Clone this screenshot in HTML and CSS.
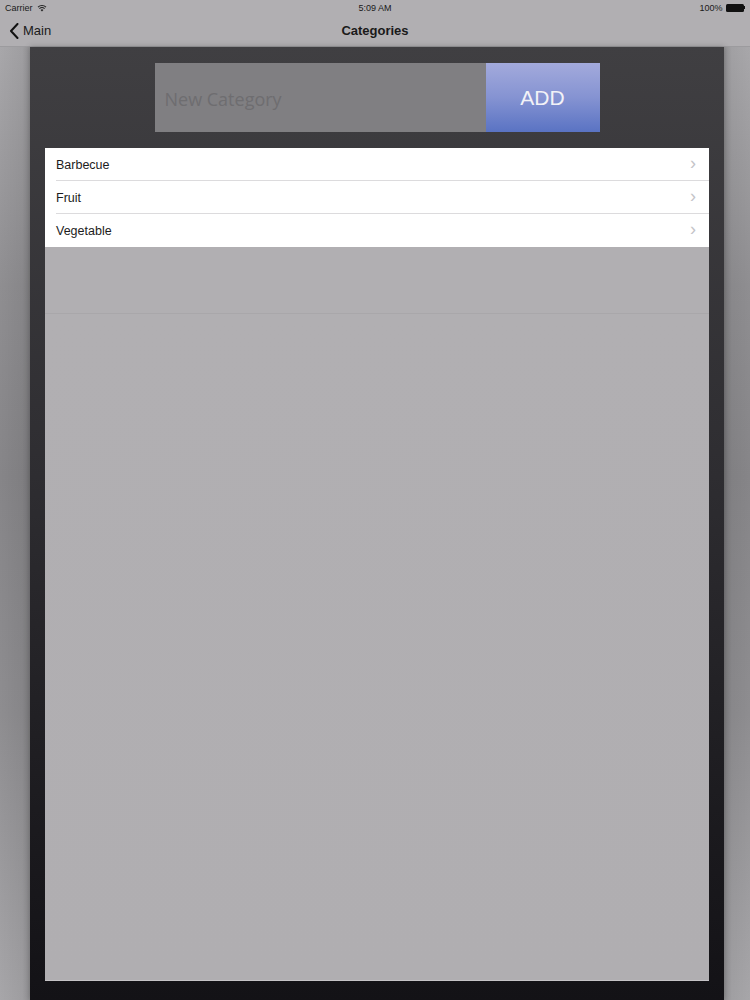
FILE: index.html
```html
<!DOCTYPE html>
<html>
<head>
<meta charset="utf-8">
<link rel="stylesheet" href="styles.css">
</head>
<body>
<div class="screen">
  <header class="topbar">
    <div class="status">
      <div class="st-left">Carrier
        <svg class="wifi" width="10" height="8" viewBox="0 0 10 8"><path d="M5 7.6 L3.6 6 A2 2 0 0 1 6.4 6 Z" fill="#222"/><path d="M2.4 4.7 A3.8 3.8 0 0 1 7.6 4.7" stroke="#222" stroke-width="1.1" fill="none"/><path d="M1 3.1 A5.8 5.8 0 0 1 9 3.1" stroke="#222" stroke-width="1.1" fill="none"/></svg>
      </div>
      <div class="st-mid">5:09 AM</div>
      <div class="st-right">100%
        <span class="battery"></span><span class="bat-tip"></span>
      </div>
    </div>
    <div class="nav">
      <div class="back">
        <svg width="10" height="16" viewBox="0 0 10 16"><path d="M8.5 1 L2 8 L8.5 15" stroke="#111" stroke-width="2" fill="none" stroke-linecap="round" stroke-linejoin="round"/></svg>
        <span>Main</span>
      </div>
      <div class="title">Categories</div>
    </div>
  </header>
  <main class="stage">
    <div class="panel">
      <div class="form">
        <div class="input">New Category</div>
        <div class="add">ADD</div>
      </div>
      <div class="table">
        <div class="row"><span>Barbecue</span><span class="chev">&#x203A;</span></div>
        <div class="row"><span>Fruit</span><span class="chev">&#x203A;</span></div>
        <div class="row last"><span>Vegetable</span><span class="chev">&#x203A;</span></div>
        <div class="empty"></div>
      </div>
    </div>
  </main>
</div>
</body>
</html>
```
FILE: styles.css
```css
* { box-sizing: border-box; }
html, body { margin: 0; padding: 0; }
body {
  width: 750px;
  height: 1000px;
  overflow: hidden;
  font-family: "Liberation Sans", Arial, sans-serif;
  background: #a9a8ab;
}
.screen { width: 750px; height: 1000px; display: flex; flex-direction: column; }
.topbar {
  background: #b1afb2;
  border-bottom: 1px solid #9c9b9e;
  height: 47px;
  flex: none;
}
.status {
  height: 15px;
  display: flex;
  align-items: center;
  justify-content: space-between;
  padding: 0 5px 0 5px;
  font-size: 9px;
  color: #1a1a1a;
  position: relative;
}
.st-left { display: flex; align-items: center; gap: 4px; }
.st-mid { position: absolute; left: 0; right: 0; text-align: center; font-size: 9px; }
.st-right { display: flex; align-items: center; gap: 3px; }
.battery { display: inline-block; width: 18px; height: 8px; border-radius: 1.5px; background: #111; }
.bat-tip { display: inline-block; width: 1.5px; height: 3px; background: #111; margin-left: -3px; }
.nav {
  height: 31px;
  position: relative;
  display: flex;
  align-items: center;
}
.back {
  display: flex;
  align-items: center;
  gap: 4px;
  padding-left: 9px;
  font-size: 13px;
  color: #1a1a1a;
}
.title {
  position: absolute;
  left: 0; right: 0;
  text-align: center;
  font-size: 13px;
  font-weight: bold;
  color: #1a1a1a;
  pointer-events: none;
}
.stage {
  flex: 1;
  display: flex;
  justify-content: center;
  padding: 0 26px 0 30px;
  background:
    linear-gradient(to right, rgba(0,0,0,0) 0, rgba(0,0,0,0.05) 22px, rgba(0,0,0,0.12) 30px, rgba(0,0,0,0) 30px, rgba(0,0,0,0) 724px, rgba(0,0,0,0.12) 724px, rgba(0,0,0,0.04) 732px, rgba(0,0,0,0) 750px),
    linear-gradient(to bottom, #a8a7aa 0%, #8f8e91 25%, #868588 45%, #8e8d90 70%, #a7a6a9 100%);
}
.panel {
  width: 694px;
  background: linear-gradient(to bottom, #403f42 0%, #2e2d31 45%, #1c1b1f 80%, #131216 100%);
  display: flex;
  flex-direction: column;
  padding: 16px 15px 19px 15px;
  box-shadow: 0 0 6px rgba(0,0,0,0.25);
}
.form {
  display: flex;
  justify-content: center;
  height: 69px;
  margin-bottom: 16px;
}
.input {
  width: 331px;
  background: #807f82;
  color: #6e6d70;
  font-family: "Open Sans", "Noto Sans", sans-serif;
  font-size: 18px;
  display: flex;
  align-items: center;
  padding-left: 10px;
  padding-top: 2px;
}
.add {
  width: 114px;
  background: linear-gradient(to bottom, #a3aadc 0%, #8593d2 50%, #5a73c3 100%);
  color: #f2f2f7;
  font-size: 21px;
  display: flex;
  align-items: center;
  justify-content: center;
}
.table {
  flex: 1;
  display: flex;
  flex-direction: column;
  background: #b1afb2;
  border-bottom: 1px solid #c5c3c6;
}
.row {
  height: 33px;
  background: #fff;
  display: flex;
  align-items: center;
  justify-content: space-between;
  padding: 0 13px 0 11px;
  font-size: 12.5px;
  color: #1c1c1c;
  position: relative;
  flex: none;
}
.row::after {
  content: "";
  position: absolute;
  left: 11px; right: 0; bottom: 0;
  height: 1px;
  background: #dcdbdd;
}
.row.last::after { display: none; }
.chev {
  color: #c4c4c8;
  font-size: 18px;
  line-height: 1;
  margin-top: -3px;
}
.empty {
  flex: 1;
  background: linear-gradient(to bottom, #b1afb2 0, #b1afb2 66px, #a9a7aa 66px, #a9a7aa 67px, #b1afb2 67px, #b0aeb1 100%);
}
```
